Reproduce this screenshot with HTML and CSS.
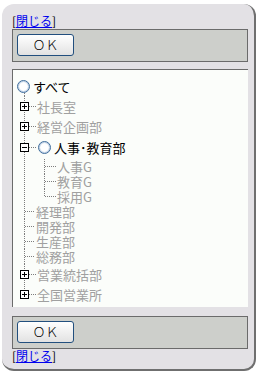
FILE: index.html
```html
<!DOCTYPE html>
<html lang="ja">
<head>
  <meta charset="UTF-8">
  <title>組織選択</title>
  <link rel="stylesheet" href="styles.css">
</head>
<body>
  <div class="panel">
    <div class="close">[<a href="#">閉じる</a>]</div>

    <div class="bar">
      <button class="ok">ＯＫ</button>
    </div>

    <div class="tree">
      <div class="root">
        <span class="radio"></span><span class="label on">すべて</span>
      </div>
      <ul class="branch">
        <li>
          <div class="row big">
            <svg class="toggle" width="9" height="9"><rect x="0.5" y="0.5" width="8" height="8" fill="#fff" stroke="#000"/><path d="M2 4.5h5M4.5 2v5" stroke="#000"/></svg>
            <span class="stem short"></span><span class="label">社長室</span>
          </div>
        </li>
        <li>
          <div class="row big">
            <svg class="toggle" width="9" height="9"><rect x="0.5" y="0.5" width="8" height="8" fill="#fff" stroke="#000"/><path d="M2 4.5h5M4.5 2v5" stroke="#000"/></svg>
            <span class="stem short"></span><span class="label">経営企画部</span>
          </div>
        </li>
        <li>
          <div class="row open">
            <svg class="toggle" width="9" height="9"><rect x="0.5" y="0.5" width="8" height="8" fill="#fff" stroke="#000"/><path d="M2 4.5h5" stroke="#000"/></svg>
            <span class="stem mid"></span><span class="radio"></span><span class="label on">人事･教育部</span>
          </div>
          <ul class="branch sub">
            <li><div class="row"><span class="stem"></span><span class="label">人事G</span></div></li>
            <li><div class="row"><span class="stem"></span><span class="label">教育G</span></div></li>
            <li><div class="row"><span class="stem"></span><span class="label">採用G</span></div></li>
          </ul>
        </li>
        <li><div class="row"><span class="stem"></span><span class="label">経理部</span></div></li>
        <li><div class="row"><span class="stem"></span><span class="label">開発部</span></div></li>
        <li><div class="row"><span class="stem"></span><span class="label">生産部</span></div></li>
        <li><div class="row"><span class="stem"></span><span class="label">総務部</span></div></li>
        <li>
          <div class="row big">
            <svg class="toggle" width="9" height="9"><rect x="0.5" y="0.5" width="8" height="8" fill="#fff" stroke="#000"/><path d="M2 4.5h5M4.5 2v5" stroke="#000"/></svg>
            <span class="stem short"></span><span class="label">営業統括部</span>
          </div>
        </li>
        <li>
          <div class="row big">
            <svg class="toggle" width="9" height="9"><rect x="0.5" y="0.5" width="8" height="8" fill="#fff" stroke="#000"/><path d="M2 4.5h5M4.5 2v5" stroke="#000"/></svg>
            <span class="stem short"></span><span class="label">全国営業所</span>
          </div>
        </li>
      </ul>
    </div>

    <div class="bar bottom">
      <button class="ok">ＯＫ</button>
    </div>

    <div class="close">[<a href="#">閉じる</a>]</div>
  </div>
</body>
</html>
```

FILE: styles.css
```css
body {
  margin: 0;
  background-color: #fff;
  font-family: 'Noto Sans CJK JP', 'Liberation Sans', sans-serif;
}

.panel {
  margin: 4px 0 0 2px;
  width: 242px;
  height: 355px;
  padding: 10px 0 0 10px;
  background-color: #e3e1e5;
  border-right: 2px solid #6f6f6f;
  border-bottom: 2px solid #6f6f6f;
  border-radius: 12px;
}

.close {
  height: 15px;
  font-size: 12px;
  line-height: 14px;
  color: #000;
}

.close a {
  color: #0000ee;
  text-decoration: underline;
}

.bar {
  width: 226px;
  height: 23px;
  padding: 4px;
  border: 1px solid #6b6b6b;
  background-color: #cdcfcb;
}

.bar.bottom {
  margin-top: 9px;
}

.ok {
  display: block;
  width: 57px;
  height: 22px;
  margin: 0;
  padding: 0;
  border: 1px solid #224f7e;
  border-radius: 3px;
  background: linear-gradient(#ffffff, #e2e2e2);
  font-family: 'Noto Sans CJK JP', sans-serif;
  font-size: 13px;
  font-weight: 300;
  line-height: 20px;
  color: #000;
}

/* tree */
.tree {
  margin-top: 7px;
  width: 235px;
  height: 231px;
  padding-top: 6px;
  border-top: 1px solid #6b6b6b;
  border-left: 1px solid #6b6b6b;
  background-color: #fbfdfa;
  overflow: hidden;
  font-size: 13px;
}

.root {
  display: flex;
  align-items: center;
  height: 20px;
  padding-left: 4px;
}

.radio {
  width: 11px;
  height: 11px;
  flex: none;
  border: 1px solid #3f6d9c;
  border-radius: 50%;
  background: radial-gradient(circle, #ffffff 45%, #dbe6f2 80%);
  box-shadow: inset 0 0 0 1px #c3d3e6;
}

.label {
  margin-left: 1px;
  line-height: 15px;
  color: #a0a0a0;
  white-space: nowrap;
}

.label.on {
  margin-left: 3px;
  color: #000;
}

.branch {
  list-style: none;
  margin: -3px 0 0 11px;
  padding: 3px 0 0;
  background: repeating-linear-gradient(#7d7d7d 0 1px, transparent 1px 2px) no-repeat 0 0 / 1px 3px;
}

.branch > li {
  background: repeating-linear-gradient(#7d7d7d 0 1px, transparent 1px 2px) no-repeat 0 0 / 1px 100%;
}

.branch > li:last-child {
  background-size: 1px 10px;
}

.branch.sub {
  margin: 0 0 0 20px;
  padding: 0;
  background: none;
}

.branch.sub > li:last-child {
  background-size: 1px 8px;
}

.row {
  display: flex;
  align-items: center;
  height: 15px;
}

.row.big {
  height: 20px;
}

.row.open {
  height: 23px;
}

.toggle {
  display: block;
  flex: none;
  margin-left: -4px;
}

.stem {
  width: 10px;
  height: 1px;
  margin-left: 1px;
  flex: none;
  background: repeating-linear-gradient(to right, #7d7d7d 0 1px, transparent 1px 2px);
}

.stem.short {
  width: 7px;
  margin-left: 0;
}

.stem.mid {
  width: 8px;
  margin: 0 1px 0 0;
}

.sub .stem {
  width: 11px;
}
```
